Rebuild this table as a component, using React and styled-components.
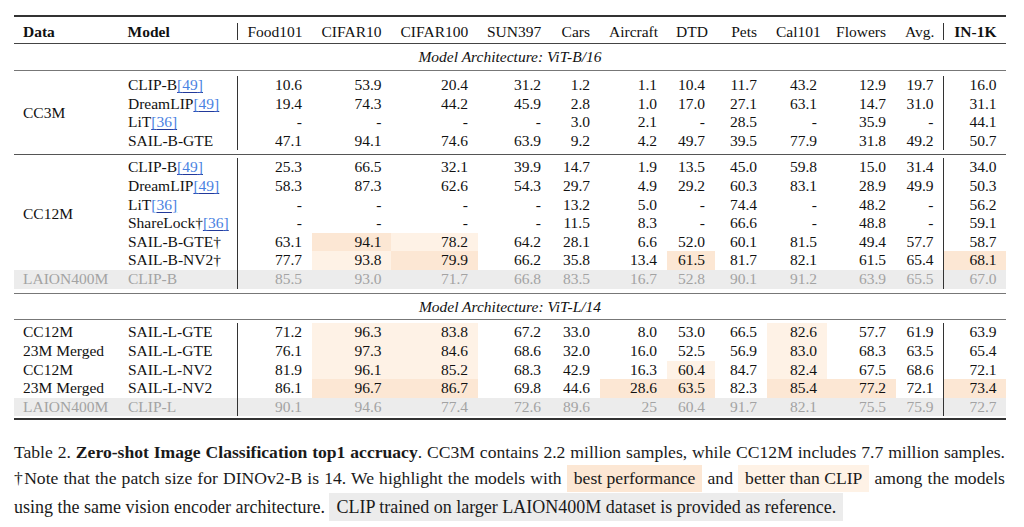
import React from 'react';
import styled, { createGlobalStyle } from 'styled-components';

const GlobalStyle = createGlobalStyle`
  * { box-sizing: border-box; }
  body {
    margin: 0;
    background: #fff;
    color: #111;
    font-family: "Liberation Serif", "Times New Roman", serif;
  }
`;

const TONES = {
  best: '#fce7d4',
  better: '#fef2e6',
  ref: '#ececec',
};

const COLUMNS = [
  { label: 'Food101', w: 73.5 },
  { label: 'CIFAR10', w: 79.5 },
  { label: 'CIFAR100', w: 86.5 },
  { label: 'SUN397', w: 73 },
  { label: 'Cars', w: 49 },
  { label: 'Aircraft', w: 67 },
  { label: 'DTD', w: 48 },
  { label: 'Pets', w: 52 },
  { label: 'Cal101', w: 60 },
  { label: 'Flowers', w: 69 },
  { label: 'Avg.', w: 48.5, divider: true },
  { label: 'IN-1K', w: 62, bold: true },
];

// value suffix: * = best performance, ^ = better than CLIP
const SECTIONS = [
  {
    arch: 'ViT-B/16',
    head: 27,
    groups: [
      {
        data: 'CC3M',
        pad: [4.5, 4],
        rows: [
          { model: 'CLIP-B', cite: 49, values: ['10.6', '53.9', '20.4', '31.2', '1.2', '1.1', '10.4', '11.7', '43.2', '12.9', '19.7', '16.0'] },
          { model: 'DreamLIP', cite: 49, values: ['19.4', '74.3', '44.2', '45.9', '2.8', '1.0', '17.0', '27.1', '63.1', '14.7', '31.0', '31.1'] },
          { model: 'LiT', cite: 36, values: ['-', '-', '-', '-', '3.0', '2.1', '-', '28.5', '-', '35.9', '-', '44.1'] },
          { model: 'SAIL-B-GTE', values: ['47.1', '94.1', '74.6', '63.9', '9.2', '4.2', '49.7', '39.5', '77.9', '31.8', '49.2', '50.7'] },
        ],
      },
      {
        data: 'CC12M',
        pad: [3, 4.8],
        rows: [
          { model: 'CLIP-B', cite: 49, values: ['25.3', '66.5', '32.1', '39.9', '14.7', '1.9', '13.5', '45.0', '59.8', '15.0', '31.4', '34.0'] },
          { model: 'DreamLIP', cite: 49, values: ['58.3', '87.3', '62.6', '54.3', '29.7', '4.9', '29.2', '60.3', '83.1', '28.9', '49.9', '50.3'] },
          { model: 'LiT', cite: 36, values: ['-', '-', '-', '-', '13.2', '5.0', '-', '74.4', '-', '48.2', '-', '56.2'] },
          { model: 'ShareLock†', cite: 36, values: ['-', '-', '-', '-', '11.5', '8.3', '-', '66.6', '-', '48.8', '-', '59.1'] },
          { model: 'SAIL-B-GTE†', values: ['63.1', '94.1*', '78.2^', '64.2', '28.1', '6.6', '52.0', '60.1', '81.5', '49.4', '57.7', '58.7'] },
          { model: 'SAIL-B-NV2†', values: ['77.7', '93.8^', '79.9*', '66.2', '35.8', '13.4', '61.5*', '81.7', '82.1', '61.5', '65.4', '68.1*'] },
        ],
        ref: { data: 'LAION400M', model: 'CLIP-B', values: ['85.5', '93.0', '71.7', '66.8', '83.5', '16.7', '52.8', '90.1', '91.2', '63.9', '65.5', '67.0'] },
      },
    ],
  },
  {
    arch: 'ViT-L/14',
    head: 26,
    groups: [
      {
        pad: [2.5, 2],
        rows: [
          { data: 'CC12M', model: 'SAIL-L-GTE', values: ['71.2', '96.3^', '83.8^', '67.2', '33.0', '8.0', '53.0', '66.5', '82.6^', '57.7', '61.9', '63.9'] },
          { data: '23M Merged', model: 'SAIL-L-GTE', values: ['76.1', '97.3^', '84.6^', '68.6', '32.0', '16.0', '52.5', '56.9', '83.0^', '68.3', '63.5', '65.4'] },
          { data: 'CC12M', model: 'SAIL-L-NV2', values: ['81.9', '96.1^', '85.2^', '68.3', '42.9', '16.3', '60.4^', '84.7', '82.4^', '67.5', '68.6', '72.1'] },
          { data: '23M Merged', model: 'SAIL-L-NV2', values: ['86.1', '96.7*', '86.7*', '69.8', '44.6', '28.6*', '63.5*', '82.3', '85.4*', '77.2*', '72.1', '73.4*'] },
        ],
        ref: { data: 'LAION400M', model: 'CLIP-L', values: ['90.1', '94.6', '77.4', '72.6', '89.6', '25', '60.4', '91.7', '82.1', '75.5', '75.9', '72.7'] },
      },
    ],
  },
];

const parseValue = (v) => {
  if (v.endsWith('*')) return [v.slice(0, -1), 'best'];
  if (v.endsWith('^')) return [v.slice(0, -1), 'better'];
  return [v, null];
};

const Page = styled.div`
  width: 1024px;
  padding: 15px 18px 0 14px;
`;

const Table = styled.table`
  width: 992px;
  table-layout: fixed;
  border-collapse: separate;
  border-spacing: 0;
  font-family: "Liberation Serif", "Times New Roman", serif;
  font-size: 15.5px;
  line-height: 18.6px;
  color: #111;
`;

const Col = styled.col`
  width: ${(p) => p.$w}px;
`;

const SpacerCell = styled.td`
  height: ${(p) => p.$h}px;
  padding: 0;
  font-size: 0;
  line-height: 0;
  border-top: ${(p) => p.$rule || 'none'};
  border-bottom: ${(p) => p.$bottom || 'none'};
`;

const HeadCell = styled.th`
  height: 17px;
  line-height: 17px;
  padding: ${(p) => (p.$align === 'left' ? '0 9.5px 0 9px' : '0 9.5px')};
  text-align: ${(p) => p.$align || 'right'};
  font-weight: ${(p) => (p.$bold ? 700 : 400)};
  white-space: nowrap;
  border-right: ${(p) => (p.$divider ? '1px solid #333' : 'none')};
`;

const SubHeadCell = styled.td`
  height: ${(p) => p.$h}px;
  padding: 0;
  text-align: center;
  font-style: italic;
  border-top: ${(p) => p.$rule};
`;

const Row = styled.tr`
  background: ${(p) => (p.$ref ? TONES.ref : 'transparent')};
  color: ${(p) => (p.$ref ? '#a3a3a3' : 'inherit')};
`;

const Cell = styled.td`
  height: 18.6px;
  padding: ${(p) => (p.$first ? '0 9.5px 0 9px' : '0 9.5px')};
  text-align: ${(p) => p.$align || 'right'};
  vertical-align: middle;
  white-space: nowrap;
  background: ${(p) => (p.$tone ? TONES[p.$tone] : 'transparent')};
  border-right: ${(p) => (p.$divider ? '1px solid #333' : 'none')};
`;

const Cite = styled.span`
  color: #4a82e2;
  text-decoration: underline;
  text-decoration-color: #22399a;
  text-underline-offset: 2px;
`;

const Caption = styled.div`
  width: 991px;
  margin-top: 20px;
  font-family: "Liberation Serif", "Times New Roman", serif;
  color: #1a1a1a;
`;

const CaptionLine = styled.div`
  height: ${(p) => p.$h}px;
  line-height: ${(p) => p.$h}px;
  white-space: nowrap;
  font-size: ${(p) => (p.$last ? 18 : 17.6)}px;
  word-spacing: ${(p) => (p.$last ? 0 : -0.6)}px;
  text-align: justify;
  text-align-last: ${(p) => (p.$last ? 'left' : 'justify')};
`;

const Mark = styled.span`
  display: inline-block;
  padding: 0 7px;
  word-spacing: 0;
  line-height: ${(p) => p.$h || 27}px;
  background: ${(p) => TONES[p.$tone]};
`;

function ValueCells({ values }) {
  return values.map((v, i) => {
    const [text, tone] = parseValue(v);
    return (
      <Cell key={i} $tone={tone} $divider={COLUMNS[i].divider}>
        {text}
      </Cell>
    );
  });
}

function ModelName({ row }) {
  return (
    <>
      {row.model}
      {row.cite && <Cite>[{row.cite}]</Cite>}
    </>
  );
}

function Group({ group, first, last }) {
  const span = COLUMNS.length + 2;
  return (
    <>
      <tr>
        <SpacerCell
          colSpan={span}
          $h={group.pad[0] + (first ? 1.5 : 1)}
          $rule={first ? '1.5px solid #777' : '1px solid #555'}
        />
      </tr>
      {group.rows.map((row, i) => (
        <Row key={i}>
          {group.data && i === 0 && (
            <Cell $align="left" $first rowSpan={group.rows.length}>
              {group.data}
            </Cell>
          )}
          {!group.data && (
            <Cell $align="left" $first>
              {row.data}
            </Cell>
          )}
          <Cell $align="left" $divider>
            <ModelName row={row} />
          </Cell>
          <ValueCells values={row.values} />
        </Row>
      ))}
      {group.ref && (
        <Row $ref>
          <Cell $align="left" $first>{group.ref.data}</Cell>
          <Cell $align="left" $divider>{group.ref.model}</Cell>
          <ValueCells values={group.ref.values} />
        </Row>
      )}
      <tr>
        <SpacerCell
          colSpan={span}
          $h={group.pad[1] + (last ? 2 : 0)}
          $bottom={last ? '2px solid #333' : 'none'}
        />
      </tr>
    </>
  );
}

export default function App() {
  const span = COLUMNS.length + 2;
  return (
    <Page>
      <GlobalStyle />
      <Table>
        <colgroup>
          <Col $w={104.5} />
          <Col $w={119.5} />
          {COLUMNS.map((c) => (
            <Col key={c.label} $w={c.w} />
          ))}
        </colgroup>
        <thead>
          <tr>
            <SpacerCell colSpan={span} $h={8} $rule="2px solid #333" />
          </tr>
          <tr>
            <HeadCell $align="left" $bold>Data</HeadCell>
            <HeadCell $align="left" $bold $divider>Model</HeadCell>
            {COLUMNS.map((c) => (
              <HeadCell key={c.label} $bold={c.bold} $divider={c.divider}>
                {c.label}
              </HeadCell>
            ))}
          </tr>
          <tr>
            <SpacerCell colSpan={span} $h={3} />
          </tr>
        </thead>
        {SECTIONS.map((section, si) => (
          <tbody key={section.arch}>
            <tr>
              <SubHeadCell
                colSpan={span}
                $h={section.head}
                $rule={si === 0 ? '1px solid #444' : '1.5px solid #777'}
              >
                Model Architecture: {section.arch}
              </SubHeadCell>
            </tr>
            {section.groups.map((group, gi) => (
              <Group
                key={gi}
                group={group}
                first={gi === 0}
                last={si === SECTIONS.length - 1 && gi === section.groups.length - 1}
              />
            ))}
          </tbody>
        ))}
      </Table>
      <Caption>
        <CaptionLine $h={24}>
          Table 2. <b>Zero-shot Image Classification top1 accruacy</b>. CC3M contains 2.2 million
          samples, while CC12M includes 7.7 million samples.
        </CaptionLine>
        <CaptionLine $h={28}>
          †Note that the patch size for DINOv2-B is 14. We highlight the models with{' '}
          <Mark $tone="best">best performance</Mark> and <Mark $tone="better">better than CLIP</Mark>{' '}
          among the models
        </CaptionLine>
        <CaptionLine $h={30} $last>
          using the same vision encoder architecture.{' '}
          <Mark $tone="ref" $h={28}>CLIP trained on larger LAION400M dataset is provided as reference.</Mark>
        </CaptionLine>
      </Caption>
    </Page>
  );
}
